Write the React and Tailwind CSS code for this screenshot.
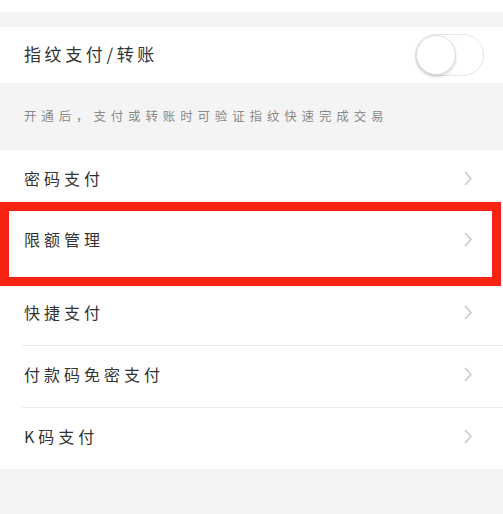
import React from 'react';

const rows = [
  { name: '密码支付', h: 'h-[61px]' },
  { name: '限额管理', h: 'h-[72px]', marked: true },
  { name: '快捷支付', h: 'h-[62px]' },
  { name: '付款码免密支付', h: 'h-[61px]', line: true },
  { name: 'K码支付', h: 'h-[61px]', line: true },
];

const Chevron = () => (
  <svg width="9" height="15" viewBox="0 0 9 15" fill="none">
    <path d="M1.5 1.5L7 7.5L1.5 13.5" stroke="#c9c9c9" strokeWidth="1.6" strokeLinecap="round" strokeLinejoin="round" />
  </svg>
);

export default function App() {
  return (
    <div
      className="w-[503px] h-[514px] overflow-hidden bg-[#f4f4f4]"
      style={{ fontFamily: '"Noto Sans CJK SC", "Noto Sans", sans-serif' }}
    >
      <div className="h-[12px] bg-white" />
      <div className="h-[15px]" />

      {/* fingerprint switch */}
      <div className="h-[56px] bg-white flex items-center justify-between pl-[24px] pr-[19px]">
        <span className="text-[17px] tracking-[3.6px] text-[#333] -mt-[2px]">指纹支付/转账</span>
        <div className="w-[69px] h-[42px] rounded-full border border-[#e6e6e6] bg-white flex items-center">
          <div className="w-[40px] h-[40px] rounded-full bg-white border border-[#dcdcdc] shadow-[0_2px_3px_rgba(0,0,0,0.15)]" />
        </div>
      </div>

      <div className="h-[67px] flex items-center pl-[24px]">
        <span className="text-[12.5px] tracking-[4.85px] text-[#8a8a8a]">
          开通后，支付或转账时可验证指纹快速完成交易
        </span>
      </div>

      {/* payment options */}
      <div className="bg-white">
        {rows.map((row) => (
          <div key={row.name}>
            {row.line && <div className="ml-[22px] h-px bg-[#ececec]" />}
            <div className={`relative ${row.h} flex items-center justify-between pl-[24px] pr-[30px]`}>
              <span className={`text-[16px] tracking-[4px] text-[#333] ${row.marked ? '-mt-[16px]' : '-mt-[5px]'}`}>
                {row.name}
              </span>
              <span className={row.marked ? '-mt-[16px]' : '-mt-[4px]'}>
                <Chevron />
              </span>
              {row.marked && (
                <div className="absolute left-0 top-[-9px] w-[501px] h-[84px] border-[9px] border-[#f5230f]" />
              )}
            </div>
          </div>
        ))}
      </div>
    </div>
  );
}
